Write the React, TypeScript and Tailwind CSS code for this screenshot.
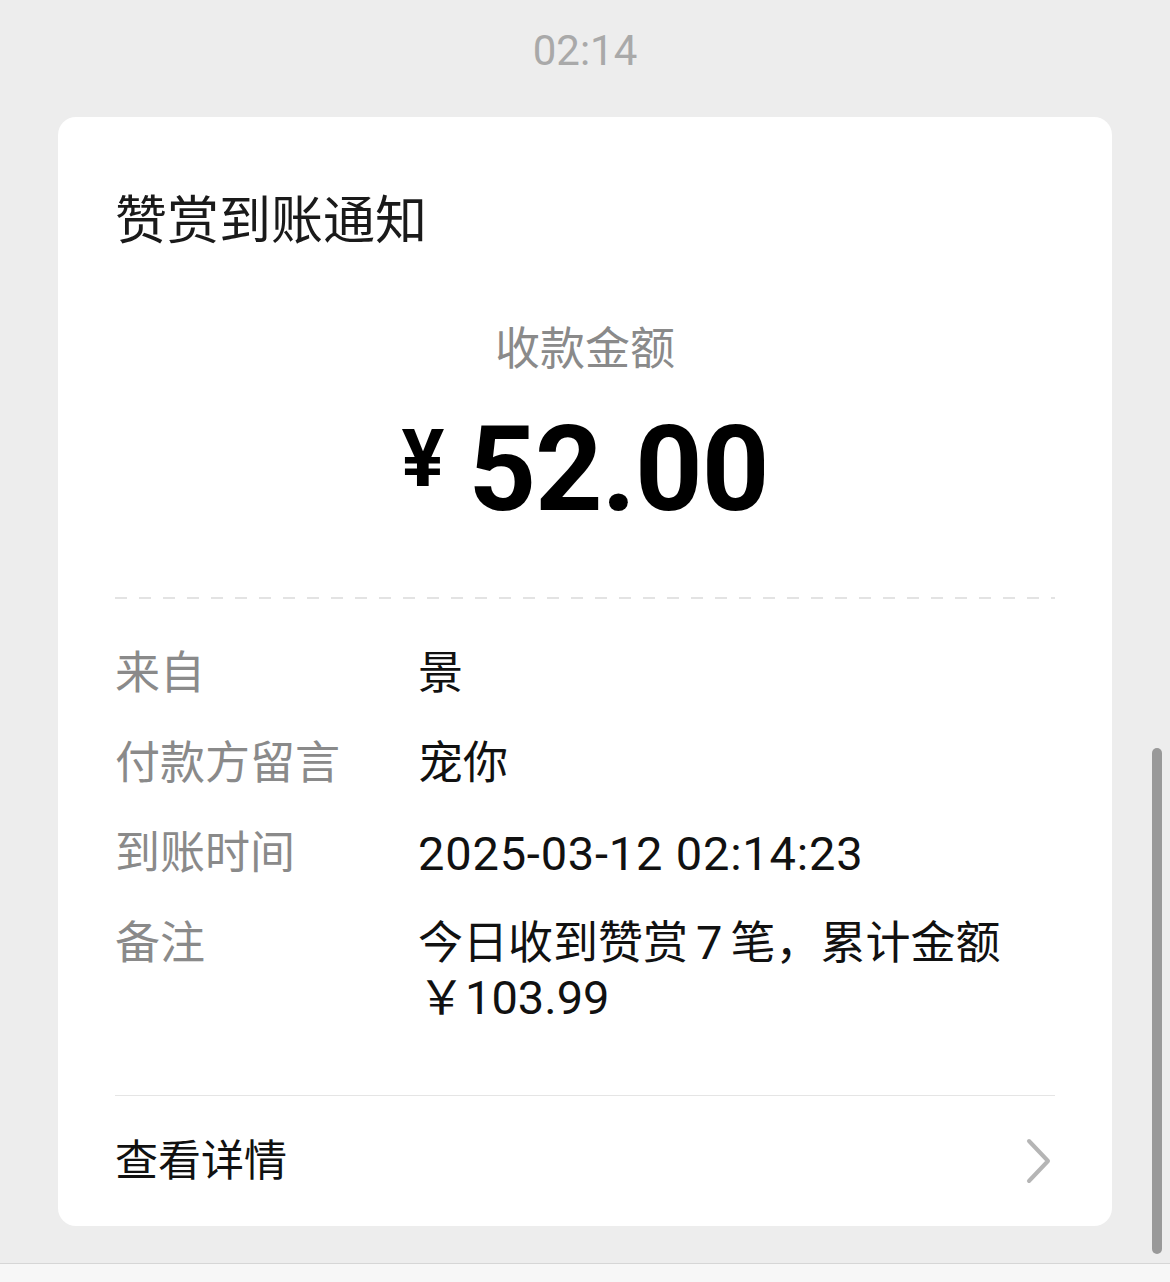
const cjk = "font-['Roboto','Noto_Sans_CJK_SC',sans-serif]";

const rows = [
  { label: "来自", value: "景" },
  { label: "付款方留言", value: "宠你" },
];

export default function App() {
  return (
    <div className={`relative h-[1282px] w-[1170px] overflow-hidden bg-[#ededed] ${cjk}`}>
      {/* time stamp */}
      <div className="flex h-[117px] items-start justify-center pt-[24px] text-[42px] leading-[54px] text-[#a9a9a9]">
        02:14
      </div>

      {/* notice card */}
      <div className="mx-[58px] flex h-[1109px] flex-col rounded-[18px] bg-white px-[57px]">
        <div className="pt-[75px] text-[52px] leading-[60px] text-[#1a1a1a]">赞赏到账通知</div>

        <div className="mt-[70px] text-center text-[45px] leading-[56px] text-[#8a8a8a]">收款金额</div>
        <div className="mt-[22px] flex items-start justify-center text-black">
          <span className="mt-[19px] mr-[24px] text-[80px] font-bold leading-[80px]">¥</span>
          <span className="text-[118px] font-bold leading-[140px] tracking-[-1px]">52.00</span>
        </div>

        <div className="mt-[57px] h-[2px] bg-[repeating-linear-gradient(90deg,#e3e3e3_0px,#e3e3e3_12px,transparent_12px,transparent_24px)]" />

        <div className="mt-[47px] flex flex-col gap-[34px] text-[45px] leading-[56px]">
          {rows.map((r) => (
            <div key={r.label} className="flex">
              <span className="w-[303px] shrink-0 text-[#8a8a8a]">{r.label}</span>
              <span className="text-[#111]">{r.value}</span>
            </div>
          ))}
          <div className="flex">
            <span className="w-[303px] shrink-0 text-[#8a8a8a]">到账时间</span>
            <span className="text-[47px] tracking-[0.8px] text-[#111]">2025-03-12 02:14:23</span>
          </div>
          <div className="flex">
            <span className="w-[303px] shrink-0 text-[#8a8a8a]">备注</span>
            <span className="leading-[54px] text-[#111]">
              今日收到赞赏<span className="mx-[8px] text-[47px]">7</span>笔，累计金额
              <br />
              <span className="text-[47px]">￥103.99</span>
            </span>
          </div>
        </div>

        <div className="mt-[69px] border-t border-[#e5e5e5]" />

        <div className="flex h-[130px] items-center justify-between">
          <span className="text-[43px] leading-[56px] text-[#111]">查看详情</span>
          <svg width="26" height="46" viewBox="0 0 26 46" className="mr-[3px]">
            <polyline
              points="3,3 22,23 3,43"
              fill="none"
              stroke="#b5b5b5"
              strokeWidth="4"
              strokeLinecap="round"
              strokeLinejoin="round"
            />
          </svg>
        </div>
      </div>

      {/* bottom bar */}
      <div className="absolute bottom-0 left-0 h-[19px] w-full border-t border-[#d6d6d6] bg-[#f7f7f7]" />

      {/* scrollbar */}
      <div className="absolute left-[1152px] top-[748px] h-[506px] w-[10px] rounded-full bg-[#999]" />
    </div>
  );
}
